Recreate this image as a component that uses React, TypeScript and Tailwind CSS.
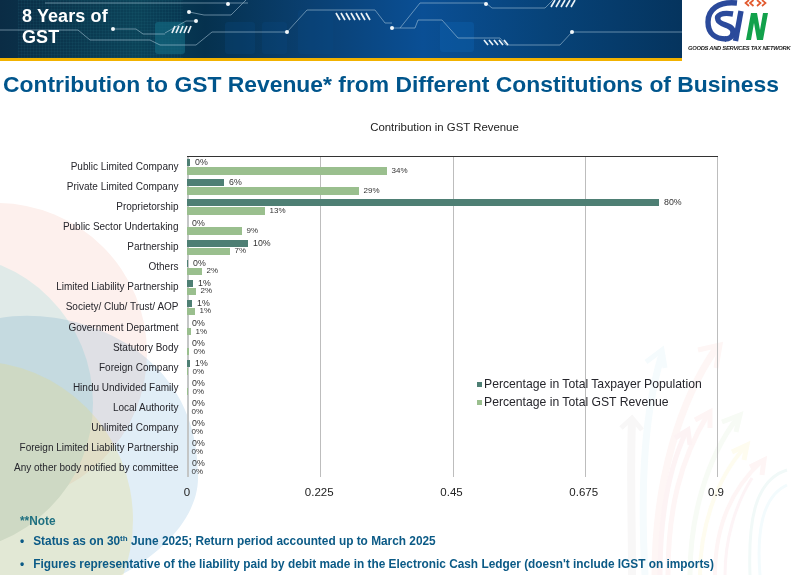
const rows: [string, number, number, string, string][] = [
  ["Public Limited Company", 3, 200, "0%", "34%"],
  ["Private Limited Company", 37, 172, "6%", "29%"],
  ["Proprietorship", 472, 78, "80%", "13%"],
  ["Public Sector Undertaking", 0, 55, "0%", "9%"],
  ["Partnership", 61, 43, "10%", "7%"],
  ["Others", 1, 15, "0%", "2%"],
  ["Limited Liability Partnership", 6, 9, "1%", "2%"],
  ["Society/ Club/ Trust/ AOP", 5, 8, "1%", "1%"],
  ["Government Department", 0, 4, "0%", "1%"],
  ["Statutory Body", 0, 2, "0%", "0%"],
  ["Foreign Company", 3, 1, "1%", "0%"],
  ["Hindu Undivided Family", 0, 1, "0%", "0%"],
  ["Local Authority", 0, 0, "0%", "0%"],
  ["Unlimited Company", 0, 0, "0%", "0%"],
  ["Foreign Limited Liability Partnership", 0, 0, "0%", "0%"],
  ["Any other body notified by committee", 0, 0, "0%", "0%"],
];

const ticks = ["0", "0.225", "0.45", "0.675", "0.9"];

// faint rising arrows in the bottom right corner
const arrows: [string, string, number][] = [
  ["M632 575 C632 520 630 470 632 420", "#f8f7f7", 8],
  ["M645 575 C640 480 645 410 662 354", "#f5fbfd", 7],
  ["M655 575 C655 480 680 400 717 347", "#fef6f5", 7],
  ["M668 575 C668 510 680 460 708 414", "#fef5f5", 5],
  ["M660 575 C660 520 668 470 686 432", "#fdf3f4", 5],
  ["M690 575 C690 520 705 460 738 417", "#f7fbf5", 5],
  ["M700 575 C700 530 715 480 745 447", "#fefcef", 4],
  ["M715 575 C715 530 730 490 762 461", "#fef5f5", 4],
  ["M725 575 C725 540 735 505 752 478", "#fdf4f6", 3],
  ["M750 575 C748 520 755 480 787 470", "#f1f9f8", 3],
  ["M760 575 C756 525 765 495 787 485", "#f3fbfd", 3],
];

function Banner() {
  return (
    <svg className="absolute inset-0 h-full w-full" viewBox="0 0 682 58" preserveAspectRatio="none">
      <defs>
        <linearGradient id="sky" x1="0" x2="1" y1="0" y2="0">
          <stop offset="0" stopColor="#0a2c45" />
          <stop offset="0.2" stopColor="#0b4258" />
          <stop offset="0.3" stopColor="#05314e" />
          <stop offset="0.45" stopColor="#0a3f70" />
          <stop offset="0.62" stopColor="#0a4f95" />
          <stop offset="0.8" stopColor="#074379" />
          <stop offset="1" stopColor="#05345e" />
        </linearGradient>
        <pattern id="mesh" width="3" height="3" patternUnits="userSpaceOnUse">
          <path d="M3 0H0V3" fill="none" stroke="#2f8a9a" strokeWidth="0.5" opacity="0.3" />
        </pattern>
      </defs>
      <rect width="682" height="58" fill="url(#sky)" />
      <rect x="18" y="0" width="165" height="58" fill="url(#mesh)" />
      <rect x="155" y="22" width="30" height="32" rx="3" fill="#12677f" opacity="0.7" />
      <rect x="225" y="22" width="30" height="32" rx="3" fill="#0b4a80" opacity="0.3" />
      <rect x="262" y="22" width="25" height="32" rx="3" fill="#0b4a80" opacity="0.3" />
      <rect x="298" y="10" width="35" height="44" rx="3" fill="#0a4a85" opacity="0.3" />
      <rect x="440" y="22" width="34" height="30" rx="3" fill="#0c62b0" opacity="0.4" />
      <g fill="none" stroke="#b9d3e2" strokeWidth="0.7" opacity="0.75">
        <path d="M45 3H228H232L248 3" />
        <path d="M189 12L204 15H231L246 0" />
        <path d="M196 21H186L165 33" />
        <path d="M0 30H78L90 40H150L160 45H196L212 32H287L307 10H375L385 23H392" />
        <path d="M113 29H136L143 34H165" />
        <path d="M392 28H400L420 3H486L492 8H545L553 0" />
        <path d="M400 28H415L418 20H442L458 38H500L506 45H560L572 32H682" />
      </g>
      <g fill="#f2f7fa">
        <circle cx="228" cy="4" r="2" />
        <circle cx="189" cy="12" r="2" />
        <circle cx="196" cy="21" r="2" />
        <circle cx="113" cy="29" r="2" />
        <circle cx="287" cy="32" r="2" />
        <circle cx="392" cy="28" r="2" />
        <circle cx="486" cy="4" r="2" />
        <circle cx="572" cy="32" r="2" />
      </g>
      <g stroke="#e8f0f5" strokeWidth="1.7">
        <path d="M172 33L175 26M176 33L179 26M180 33L183 26M184 33L187 26M188 33L191 26" />
        <path d="M336 13L340 20M341 13L345 20M346 13L350 20M351 13L355 20M356 13L360 20M361 13L365 20M366 13L370 20" />
        <path d="M551 7L555 0M556 7L560 0M561 7L565 0M566 7L570 0M571 7L575 0" />
        <path d="M484 40L488 45M489 40L493 45M494 40L498 45M499 40L503 45M504 40L508 45" />
      </g>
    </svg>
  );
}

function GstnLogo() {
  return (
    <svg className="h-[45px] w-[110px]" viewBox="682 0 110 45">
      <g fill="none" stroke="#2b4a9b" strokeWidth="5.4" strokeLinecap="butt">
        <path d="M737 3C718 1 708 10 708 22C708 34 716 39 726 39" />
        <path d="M733 14C722 12 716 15 718 20C720 26 733 24 733 32C733 37 729 39 725 39" />
        <path d="M741 11L735.500 41" />
      </g>
      <path d="M746 40L751 13H757L760 30L763 13H768L763 40H757L754 23L751 40Z" fill="#12a14b" />
      <g fill="none" stroke="#e2592e" strokeWidth="1.7">
        <path d="M749 0L745.500 3L749 6M753.500 0L750 3L753.500 6M757 0L760.500 3L757 6M762 0L765.500 3L762 6" />
      </g>
    </svg>
  );
}

function Row({ row }: { row: [string, number, number, string, string] }) {
  const [name, dark, light, darkLabel, lightLabel] = row;
  return (
    <div className="flex h-[20.07px]">
      <div className="w-[187px] shrink-0 pr-[8.5px] pt-[5px] text-right text-[10px] leading-[12px] whitespace-nowrap text-[#26262c]">
        {name}
      </div>
      <div className="flex flex-col pt-[3px]">
        <div className="flex h-[7.500px] items-center gap-[5px]">
          <div className="h-[7px] bg-[#4e7f74]" style={{ width: dark }} />
          <span className="text-[8.8px] leading-none text-[#333]">{darkLabel}</span>
        </div>
        <div className="mt-[0.5px] flex h-[8px] items-center gap-[4.5px]">
          <div className="h-[7.500px] bg-[#9abf8e]" style={{ width: light }} />
          <span className="text-[8px] leading-none text-[#333]">{lightLabel}</span>
        </div>
      </div>
    </div>
  );
}

export default function App() {
  return (
    <div
      className="relative h-[575px] w-[792px] overflow-hidden bg-white"
      style={{ fontFamily: '"Liberation Sans", Arial, sans-serif' }}
    >
      {/* decoration behind the slide */}
      <svg className="absolute inset-0" width="792" height="575" viewBox="0 0 792 575">
        <circle cx="-3" cy="353" r="150" fill="#fdf0ed" />
        <circle cx="-56" cy="403" r="149" fill="#e0eae8" />
        <path
          d="M0 318C70 305 200 345 198 478C198 515 165 552 121 575H0Z"
          fill="#e1eef7"
          style={{ mixBlendMode: "multiply" }}
        />
        <circle cx="-26" cy="520" r="159" fill="#e9d775" opacity="0.26" />
        <g fill="none" strokeLinecap="butt">
          {arrows.map(([d, color, w]) => (
            <path key={d} d={d} stroke={color} strokeWidth={w} />
          ))}
        </g>
        <g fill="none" strokeWidth="5">
          <path d="M621 428L632 418L642 430" stroke="#f8f7f7" />
          <path d="M646 362L662 350L665 368" stroke="#f5fbfd" />
          <path d="M698 350L720 345L716 368" stroke="#fef6f5" />
          <path d="M695 420L710 412L710 428" stroke="#fef5f5" />
          <path d="M675 438L688 430L690 445" stroke="#fdf3f4" />
          <path d="M722 422L740 415L736 432" stroke="#f7fbf5" />
          <path d="M732 452L747 445L744 460" stroke="#fefcef" />
          <path d="M750 467L764 460L762 475" stroke="#fef5f5" />
        </g>
      </svg>

      <div className="relative flex h-[61px]">
        <div className="relative h-[61px] w-[682px] shrink-0 border-b-[3px] border-[#f2b200]">
          <Banner />
          <div className="relative pl-[22px] pt-[6px] text-[18px] leading-[21px] font-bold tracking-[0.1px] text-white">
            8 Years of
            <br />
            GST
          </div>
        </div>
        <div className="min-w-0 flex-1">
          <GstnLogo />
          <div className="-mt-[1px] pl-[6px] text-[5.8px] leading-[8px] font-bold italic whitespace-nowrap tracking-[-0.28px] text-[#222]">
            GOODS AND SERVICES TAX NETWORK
          </div>
        </div>
      </div>

      <h1 className="relative pl-[3px] pt-[9px] text-[22.87px] leading-[28px] font-bold whitespace-nowrap text-[#00558c]">
        Contribution to GST Revenue* from Different Constitutions of Business
      </h1>

      <div className="relative pl-[187px] pt-[23px]">
        <div className="w-[515px] text-center text-[11.4px] leading-[13px] text-[#222]">
          Contribution in GST Revenue
        </div>
      </div>

      <div className="relative mt-[22px]">
        {/* grid lines of the plot */}
        <div className="absolute left-[187px] top-0 flex h-[321px] w-[531px] justify-between border-t border-[#333]">
          <div className="w-[2px] bg-[#c4c6c6]" />
          <div className="w-px bg-[#bdbdbd]" />
          <div className="w-px bg-[#bdbdbd]" />
          <div className="w-px bg-[#bdbdbd]" />
          <div className="w-px bg-[#bdbdbd]" />
        </div>
        <div className="relative">
          {rows.map((row) => (
            <Row key={row[0]} row={row} />
          ))}
        </div>
        <div className="relative flex h-[15px] w-[716px] pl-[187px] pt-[9px]">
          <div className="flex w-full justify-between">
            {ticks.map((t) => (
              <span key={t} className="flex w-0 justify-center text-[11.5px] leading-[13px] text-[#222]">
                {t}
              </span>
            ))}
          </div>
        </div>
        {/* legend */}
        <div className="absolute left-[477px] top-[221px] flex flex-col gap-[4px] text-[12.2px] leading-[14px] text-[#26262c]">
          <div className="flex items-center gap-[2px] whitespace-nowrap">
            <span className="h-[5px] w-[5px] bg-[#4e7f74]" />
            Percentage in Total Taxpayer Population
          </div>
          <div className="flex items-center gap-[2px] whitespace-nowrap">
            <span className="h-[5px] w-[5px] bg-[#9abf8e]" />
            Percentage in Total GST Revenue
          </div>
        </div>
      </div>

      <div className="relative pl-[20px] pt-[23px] text-[11.85px] font-bold text-[#0b5a86]">
        <div className="leading-[13px] text-[#1f7080]">**Note</div>
        <div className="mt-[7px] flex h-[13px] items-center gap-[9px] leading-[13px]">
          <span className="text-[12px]">•</span>
          <span className="whitespace-nowrap">
            Status as on 30<sup className="text-[8px]">th</sup> June 2025; Return period accounted up to March 2025
          </span>
        </div>
        <div className="mt-[10px] flex h-[13px] items-center gap-[9px] leading-[13px]">
          <span className="text-[12px]">•</span>
          <span className="whitespace-nowrap">
            Figures representative of the liability paid by debit made in the Electronic Cash Ledger (doesn't include IGST on imports)
          </span>
        </div>
      </div>
    </div>
  );
}
